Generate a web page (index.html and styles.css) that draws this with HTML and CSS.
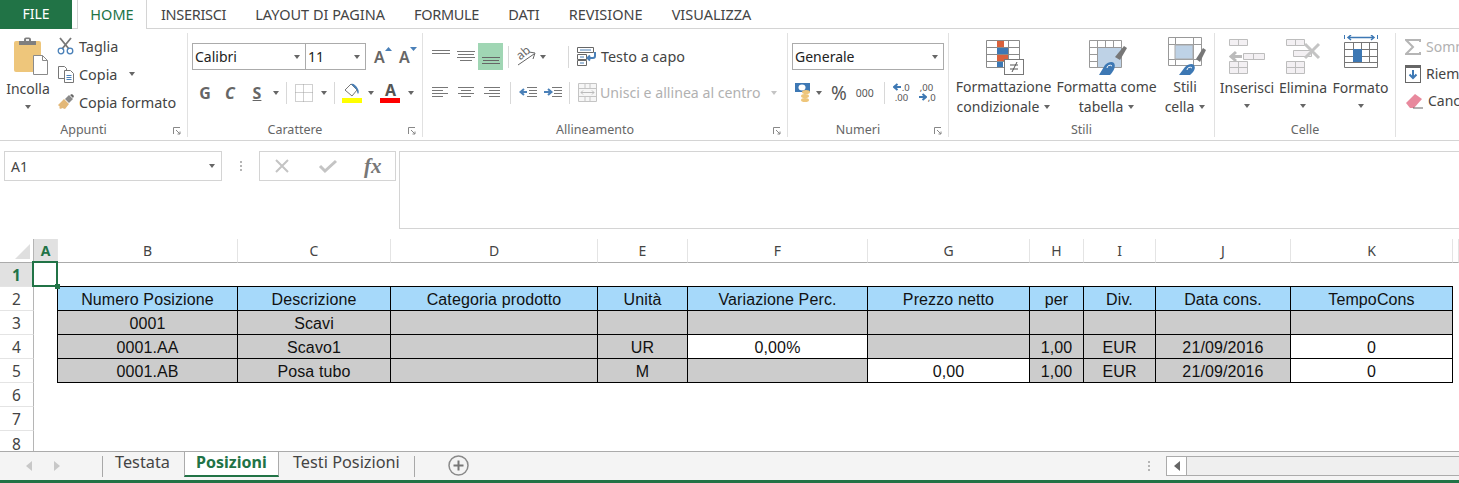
FILE: index.html
```html
<!DOCTYPE html>
<html lang="it">
<head>
  <meta charset="UTF-8">
  <title>Posizioni - Excel</title>
  <link rel="stylesheet" href="styles.css">
</head>
<body>
  <nav class="tabs">
    <div class="tab-file">FILE</div>
    <div class="tab tab-home">HOME</div>
    <div class="tab tab-tight">INSERISCI</div>
    <div class="tab">LAYOUT DI PAGINA</div>
    <div class="tab tab-tight">FORMULE</div>
    <div class="tab">DATI</div>
    <div class="tab">REVISIONE</div>
    <div class="tab">VISUALIZZA</div>
  </nav>

  <section class="ribbon">
    <!-- Appunti -->
    <div class="group g-appunti">
      <div class="group-body">
        <div class="big big-paste">
          <svg class="big-icon" width="34" height="38" viewBox="0 0 34 38"><rect x="0" y="4" width="27" height="31" rx="2" fill="#eec67b"/><path d="M5 4h5V2.500a2 2 0 0 1 2-2h3a2 2 0 0 1 2 2V4h5v4H5z" fill="#7f7f7f"/><rect x="12" y="2" width="3" height="2" fill="#eee"/><path d="M19.500 18.500h9l5 5v14h-14z" fill="#fff" stroke="#8a8a8a"/><path d="M28.500 18.500v5h5" fill="none" stroke="#8a8a8a"/></svg>
          <span class="big-label">Incolla</span>
          <i class="caret"></i>
        </div>
        <div class="small-list">
          <div class="small"><svg width="18" height="18" viewBox="0 0 18 18"><path d="M3 1l9 11M14 1L5 12" stroke="#777" stroke-width="1.800" fill="none"/><circle cx="4" cy="14" r="2.800" fill="none" stroke="#4a80b8" stroke-width="1.300"/><circle cx="13" cy="14" r="2.800" fill="none" stroke="#4a80b8" stroke-width="1.300"/></svg><span>Taglia</span></div>
          <div class="small"><svg width="18" height="18" viewBox="0 0 18 18"><path d="M1.500 1.500h6l2 2v10h-8z" fill="#fff" stroke="#777"/><path d="M7.500 5.500h6l3 3v9h-9z" fill="#fff" stroke="#777"/><path d="M9.500 10.500h5M9.500 12.500h5M9.500 14.500h5" stroke="#4a80b8"/></svg><span>Copia</span><i class="caret caret-copy"></i></div>
          <div class="small"><svg width="18" height="18" viewBox="0 0 18 18"><path d="M1 12l6-6 5 5-4 5-3-1-1 1-2-1 1-1z" fill="#e3b878"/><path d="M8 6l4-4 4 4-4 4z" fill="#8a8a8a"/><path d="M13 2l2-1 2 2-1 2z" fill="#666"/></svg><span>Copia formato</span></div>
        </div>
      </div>
      <div class="group-label pad-launcher">Appunti<svg class="launcher" width="8" height="8" viewBox="0 0 8 8"><path d="M.500 7V.500H7M3 3l4 4M7 4.500V7H4.500" fill="none" stroke="#888"/></svg></div>
    </div>

    <!-- Carattere -->
    <div class="group g-carattere">
      <div class="group-body column">
        <div class="tool-row">
          <div class="select sel-font"><span>Calibri</span><i class="caret"></i></div>
          <div class="select sel-size"><span>11</span><i class="caret"></i></div>
          <div class="font-size-btn grow-a">A<svg width="7" height="4" viewBox="0 0 7 4"><path d="M0 4l3.500-4L7 4z" fill="#4a80b8"/></svg></div>
          <div class="font-size-btn shrink-a">A<svg width="7" height="4" viewBox="0 0 7 4"><path d="M0 0l3.500 4L7 0z" fill="#4a80b8"/></svg></div>
        </div>
        <div class="tool-row row-low">
          <b class="style-btn">G</b>
          <b class="style-btn italic">C</b>
          <b class="style-btn under">S</b>
          <i class="caret caret-s"></i>
          <i class="sep sep-a"></i>
          <svg class="ic-border" width="18" height="18" viewBox="0 0 18 18"><path d="M.500.500h17v17H.500zM8.500 .500v17M.500 8.500h17" fill="none" stroke="#a0a0a0" stroke-dasharray="1 1"/></svg>
          <i class="caret caret-b"></i>
          <i class="sep sep-b"></i>
          <div class="color-btn fill-btn"><svg width="21" height="14" viewBox="0 0 21 14"><path d="M9 1l6 6-5 6-7-6z" fill="#fff" stroke="#777"/><path d="M9 1c2-1 5 1 7 5 1 2 1 4 0 5-1-1-1-3-1-4z" fill="#4a80b8"/></svg><i class="swatch yellow"></i></div>
          <i class="caret caret-f"></i>
          <div class="color-btn text-color"><b>A</b><i class="swatch red"></i></div>
          <i class="caret caret-t"></i>
        </div>
      </div>
      <div class="group-label pad-launcher">Carattere<svg class="launcher" width="8" height="8" viewBox="0 0 8 8"><path d="M.500 7V.500H7M3 3l4 4M7 4.500V7H4.500" fill="none" stroke="#888"/></svg></div>
    </div>

    <!-- Allineamento -->
    <div class="group g-allinea">
      <div class="group-body column">
        <div class="tool-row row-align">
          <div class="al-btn"><svg width="18" height="18" viewBox="0 0 18 18"><path d="M0 2.500h18M0 5.500h18" stroke="#777"/></svg></div>
          <div class="al-btn"><svg width="18" height="18" viewBox="0 0 18 18"><path d="M0 3.500h18M1 6.500h16M0 9.500h18M3 12.500h12" stroke="#777"/></svg></div>
          <div class="al-btn al-on"><svg width="18" height="18" viewBox="0 0 18 18"><path d="M0 9.500h18M1 12.500h16M0 15.500h18" stroke="#666"/></svg></div>
          <i class="sep sep-c"></i>
          <div class="orient"><span>ab</span><svg width="20" height="18" viewBox="0 0 20 18"><path d="M2 17L18 6" stroke="#666"/><path d="M13 4l6 1-2 6" fill="none" stroke="#666"/></svg></div>
          <i class="caret caret-o"></i>
          <i class="sep sep-d"></i>
          <div class="wide wrap-btn"><svg width="21" height="19" viewBox="0 0 21 19"><path d="M.500.500h16v5H.500zM.500 7.500h9v5h-9zM.500 13.500h9v5h-9z" fill="#fff" stroke="#666"/><path d="M3 3h11M3 10h4M3 16h4" stroke="#4a80b8"/><path d="M18 5v4a2 2 0 0 1-2 2h-5M13 8.500L10.500 11l2.500 2.500" fill="none" stroke="#4a80b8" stroke-width="2"/></svg><span>Testo a capo</span></div>
        </div>
        <div class="tool-row row-low row-align-low">
          <svg class="lines" width="16" height="12" viewBox="0 0 16 12"><path d="M0 .500h16M0 3.500h11M0 6.500h16M0 9.500h11" stroke="#777"/></svg>
          <svg class="lines" width="16" height="12" viewBox="0 0 16 12"><path d="M0 .500h16M3 3.500h10M0 6.500h16M3 9.500h10" stroke="#777"/></svg>
          <svg class="lines" width="16" height="12" viewBox="0 0 16 12"><path d="M0 .500h16M5 3.500h11M0 6.500h16M5 9.500h11" stroke="#777"/></svg>
          <i class="sep sep-e"></i>
          <svg class="ind" width="18" height="12" viewBox="0 0 18 12"><path d="M8 .500h10M10 3.500h8M10 6.500h8M8 9.500h10" stroke="#777"/><path d="M8 5H2M5 2L1.500 5 5 8" fill="none" stroke="#4a80b8" stroke-width="2"/></svg>
          <svg class="ind" width="18" height="12" viewBox="0 0 18 12"><path d="M8 .500h10M10 3.500h8M10 6.500h8M8 9.500h10" stroke="#777"/><path d="M0 5h7M4 2l3.500 3L4 8" fill="none" stroke="#4a80b8" stroke-width="2"/></svg>
          <i class="sep sep-f"></i>
          <div class="wide merge-btn"><svg width="19" height="19" viewBox="0 0 19 19"><path d="M.500.500h18v18H.500zM.500 5.500h18M.500 13.500h18M7 .500v5M12 .500v5M7 13.500v5M12 13.500v5" fill="#f6f6f6" stroke="#c4c4c4"/><path d="M3 9.500h13M5 7.500l-2 2 2 2M14 7.500l2 2-2 2" fill="none" stroke="#bbb"/></svg><span>Unisci e allinea al centro</span><i class="caret caret-m"></i></div>
        </div>
      </div>
      <div class="group-label pad-launcher">Allineamento<svg class="launcher" width="8" height="8" viewBox="0 0 8 8"><path d="M.500 7V.500H7M3 3l4 4M7 4.500V7H4.500" fill="none" stroke="#888"/></svg></div>
    </div>

    <!-- Numeri -->
    <div class="group g-numeri">
      <div class="group-body column">
        <div class="tool-row">
          <div class="select sel-num"><span>Generale</span><i class="caret"></i></div>
        </div>
        <div class="tool-row row-low row-num">
          <svg class="ic-money" width="16" height="19" viewBox="0 0 16 19"><rect x="0" y="0" width="15" height="9" fill="#3d78b4"/><ellipse cx="7" cy="4.500" rx="3.500" ry="3" fill="#fff"/><ellipse cx="11" cy="9" rx="4" ry="2" fill="#eec67b"/><ellipse cx="10" cy="13" rx="4" ry="2" fill="#eec67b"/><ellipse cx="10" cy="17" rx="4" ry="2" fill="#eec67b"/></svg>
          <i class="caret caret-n"></i>
          <span class="percent">%</span>
          <span class="thousands">000</span>
          <i class="sep sep-g"></i>
          <div class="dec"><svg width="8" height="8" viewBox="0 0 8 8"><path d="M8 4H2M4.500 1L1 4l3.500 3" fill="none" stroke="#3d78b4" stroke-width="2"/></svg><span class="dec-a">.0</span><span class="dec-b">.00</span></div>
          <div class="dec dec-right"><span class="dec-c">,00</span><svg width="8" height="8" viewBox="0 0 8 8"><path d="M0 4h6M3.500 1L7 4 3.500 7" fill="none" stroke="#3d78b4" stroke-width="2"/></svg><span class="dec-d">,0</span></div>
        </div>
      </div>
      <div class="group-label pad-launcher">Numeri<svg class="launcher" width="8" height="8" viewBox="0 0 8 8"><path d="M.500 7V.500H7M3 3l4 4M7 4.500V7H4.500" fill="none" stroke="#888"/></svg></div>
    </div>

    <!-- Stili -->
    <div class="group g-stili">
      <div class="group-body">
        <div class="big big-cond">
          <svg class="big-icon" width="38" height="36" viewBox="0 0 38 36"><path d="M.500.500h33v27H.500zM11.500.500v27M22.500.500v27M.500 7.500h33M.500 14.500h33M.500 21.500h33" fill="#fff" stroke="#8a8a8a"/><path d="M11 1h7v6h-7zM11 15h11v6H11z" fill="#d9613c"/><path d="M11 8h11v6H11zM11 22h6v5h-6z" fill="#3d78b4"/><rect x="18.500" y="19.500" width="19" height="15" fill="#fff" stroke="#777"/><path d="M24 25h8M24 29h8M31 22l-5 10" stroke="#555"/></svg>
          <span class="big-label two">Formattazione<br>condizionale<i class="caret inline"></i></span>
        </div>
        <div class="big big-table">
          <svg class="big-icon" width="38" height="38" viewBox="0 0 38 38"><path d="M.500 3.500h32v27H.500zM8.500 3.500v27M16.500 3.500v27M24.500 3.500v27M.500 10.500h32M.500 17.500h32M.500 24.500h32" fill="#fff" stroke="#999"/><rect x="9" y="11" width="23" height="19" fill="#bed2e6"/><path d="M26 20l9-11 3 2-7 12z" fill="#777"/><path d="M10 38l6-10c3-3 7-4 9-2 2 3 0 8-4 12z" fill="#3d78b4"/><path d="M18 31a3 3 0 0 1 5-2" stroke="#fff" fill="none"/></svg>
          <span class="big-label two">Formatta come<br>tabella<i class="caret inline"></i></span>
        </div>
        <div class="big big-style">
          <svg class="big-icon" width="38" height="38" viewBox="0 0 38 38"><path d="M.500.500h33v28H.500zM7.500.500v28M25.500.500v28M.500 7.500h33M.500 22.500h33" fill="#fff" stroke="#999"/><rect x="7" y="8" width="18" height="14" fill="#bed2e6" stroke="#aaa"/><path d="M28 22l7-11 3 2-6 12z" fill="#777"/><path d="M11 38l6-8c3-3 7-4 9-2 2 3 0 7-4 10z" fill="#3d78b4"/><path d="M19 33a3 3 0 0 1 5-2" stroke="#fff" fill="none"/></svg>
          <span class="big-label two">Stili<br>cella<i class="caret inline"></i></span>
        </div>
      </div>
      <div class="group-label">Stili</div>
    </div>

    <!-- Celle -->
    <div class="group g-celle">
      <div class="group-body">
        <div class="big big-ins">
          <svg class="big-icon" width="36" height="35" viewBox="0 0 36 35"><path d="M.500.500h18v6H.500zM9.500.500v6M14.500 14.500h21v6h-21zM24.500 14.500v6M.500 22.500h18v12H.500zM.500 28.500h18M9.500 22.500v12" fill="#f3f0f3" stroke="#bdbdbd"/><path d="M13 17.500H2M7 13l-5 4.500L7 22" fill="none" stroke="#bbb" stroke-width="3"/></svg>
          <span class="big-label">Inserisci</span>
          <i class="caret"></i>
        </div>
        <div class="big big-del">
          <svg class="big-icon" width="35" height="35" viewBox="0 0 35 35"><path d="M.500.500h18v6H.500zM9.500.500v6M7.500 11.500h18v6h-18zM.500 22.500h18v12H.500zM.500 28.500h18M9.500 22.500v12" fill="#f3f0f3" stroke="#bdbdbd"/><path d="M19 5l14 14M33 5L19 19" stroke="#c4c4c4" stroke-width="3"/></svg>
          <span class="big-label">Elimina</span>
          <i class="caret"></i>
        </div>
        <div class="big big-fmt">
          <svg class="big-icon" width="34" height="37" viewBox="0 0 34 37"><path d="M.500 0v4M33.500 0v4" fill="none" stroke="#3d78b4"/><path d="M4 2.500h26M7 0L4 2.500 7 5M27 0l3 2.500L27 5" fill="none" stroke="#3d78b4" stroke-width="1.500"/><path d="M.500 7.500h33v25H.500zM.500 14.500h33M.500 21.500h33M.500 27.500h33M9.500 7.500v20M17.500 7.500v20M25.500 7.500v20" fill="#fff" stroke="#777"/><rect x="9" y="14" width="9" height="13" fill="#3d78b4"/></svg>
          <span class="big-label">Formato</span>
          <i class="caret"></i>
        </div>
      </div>
      <div class="group-label">Celle</div>
    </div>

    <!-- Modifica, tagliato dal bordo della finestra -->
    <div class="group g-modifica">
      <div class="edit-list">
        <div class="small edit-off"><svg width="16" height="16" viewBox="0 0 16 16"><path d="M15 3V1H1l7 7-7 7h14v-2" fill="none" stroke="#b5b5b5" stroke-width="2"/></svg><span>Somma automatica</span></div>
        <div class="small"><svg width="16" height="18" viewBox="0 0 16 18"><rect x=".5" y="2.500" width="15" height="15" fill="#fff" stroke="#666"/><rect x="0" y="0" width="16" height="3" fill="#666"/><path d="M8 5v8M4.500 9.500L8 13l3.500-3.500" fill="none" stroke="#3d78b4" stroke-width="2"/></svg><span>Riempimento</span></div>
        <div class="small"><svg width="18" height="16" viewBox="0 0 18 16"><path d="M1 10l9-9 7 5-8 9H5z" fill="#e8899d"/><path d="M8 15h10" stroke="#666"/></svg><span>Cancella</span></div>
      </div>
    </div>
  </section>

  <section class="formula-bar">
    <div class="name-box"><span>A1</span><i class="caret"></i></div>
    <div class="grip"><i></i><i></i><i></i></div>
    <div class="fx-box">
      <svg width="16" height="16" viewBox="0 0 16 16"><path d="M2 2l12 12M14 2L2 14" stroke="#c4c4c4" stroke-width="2"/></svg>
      <svg width="20" height="16" viewBox="0 0 20 16"><path d="M2 8l5 5L18 3" fill="none" stroke="#c4c4c4" stroke-width="3"/></svg>
      <span class="fx">fx</span>
    </div>
    <div class="formula-input"></div>
  </section>

  <section class="sheet">
    <div class="cell head corner"><i></i></div>
    <div class="cell head head-on">A</div>
    <div class="cell head">B</div>
    <div class="cell head">C</div>
    <div class="cell head">D</div>
    <div class="cell head">E</div>
    <div class="cell head">F</div>
    <div class="cell head">G</div>
    <div class="cell head">H</div>
    <div class="cell head">I</div>
    <div class="cell head">J</div>
    <div class="cell head">K</div>
    <div class="cell head"></div>

    <div class="cell row-head row-on">1</div>
    <div class="cell a1"><div class="selection"><i></i></div></div>
    <div class="cell roof"></div><div class="cell roof"></div><div class="cell roof"></div><div class="cell roof"></div><div class="cell roof"></div><div class="cell roof"></div><div class="cell roof"></div><div class="cell roof"></div><div class="cell roof"></div><div class="cell roof"></div>
    <div class="cell"></div>

    <div class="cell row-head">2</div>
    <div class="cell before"></div>
    <div class="cell data blue">Numero Posizione</div>
    <div class="cell data blue">Descrizione</div>
    <div class="cell data blue">Categoria prodotto</div>
    <div class="cell data blue">Unità</div>
    <div class="cell data blue">Variazione Perc.</div>
    <div class="cell data blue">Prezzo netto</div>
    <div class="cell data blue">per</div>
    <div class="cell data blue">Div.</div>
    <div class="cell data blue">Data cons.</div>
    <div class="cell data blue">TempoCons</div>
    <div class="cell"></div>

    <div class="cell row-head">3</div>
    <div class="cell before"></div>
    <div class="cell data grey">0001</div>
    <div class="cell data grey">Scavi</div>
    <div class="cell data grey"></div>
    <div class="cell data grey"></div>
    <div class="cell data grey"></div>
    <div class="cell data grey"></div>
    <div class="cell data grey"></div>
    <div class="cell data grey"></div>
    <div class="cell data grey"></div>
    <div class="cell data grey"></div>
    <div class="cell"></div>

    <div class="cell row-head">4</div>
    <div class="cell before"></div>
    <div class="cell data grey">0001.AA</div>
    <div class="cell data grey">Scavo1</div>
    <div class="cell data grey"></div>
    <div class="cell data grey">UR</div>
    <div class="cell data">0,00%</div>
    <div class="cell data grey"></div>
    <div class="cell data grey">1,00</div>
    <div class="cell data grey">EUR</div>
    <div class="cell data grey">21/09/2016</div>
    <div class="cell data">0</div>
    <div class="cell"></div>

    <div class="cell row-head">5</div>
    <div class="cell before"></div>
    <div class="cell data grey">0001.AB</div>
    <div class="cell data grey">Posa tubo</div>
    <div class="cell data grey"></div>
    <div class="cell data grey">M</div>
    <div class="cell data grey"></div>
    <div class="cell data">0,00</div>
    <div class="cell data grey">1,00</div>
    <div class="cell data grey">EUR</div>
    <div class="cell data grey">21/09/2016</div>
    <div class="cell data">0</div>
    <div class="cell"></div>

    <div class="cell row-head">6</div>
    <div class="cell blank-row"></div>
    <div class="cell row-head">7</div>
    <div class="cell blank-row"></div>
    <div class="cell row-head row-cut">8</div>
    <div class="cell blank-row"></div>
  </section>

  <footer class="sheet-tabs">
    <svg class="nav-arrow" width="7" height="10" viewBox="0 0 7 10"><path d="M6 0v10L0 5z" fill="#c8c8c8"/></svg>
    <svg class="nav-arrow next" width="7" height="10" viewBox="0 0 7 10"><path d="M0 0v10l6-5z" fill="#c8c8c8"/></svg>
    <i class="tab-sep"></i>
    <div class="sheet-tab first">Testata</div>
    <div class="sheet-tab active">Posizioni</div>
    <div class="sheet-tab">Testi Posizioni</div>
    <i class="tab-sep tab-sep-end"></i>
    <svg class="add-sheet" width="21" height="21" viewBox="0 0 21 21"><circle cx="10.500" cy="10.500" r="9.500" fill="none" stroke="#8a8a8a" stroke-width="1.500"/><path d="M5.500 10.500h10M10.500 5.500v10" stroke="#777" stroke-width="2"/></svg>
    <div class="grip tabs-grip"><i></i><i></i><i></i></div>
    <div class="hscroll"><div class="hscroll-btn"><svg width="6" height="10" viewBox="0 0 6 10"><path d="M6 0v10L0 5z" fill="#666"/></svg></div></div>
  </footer>
  <div class="status"></div>
</body>
</html>
```

FILE: styles.css
```css
html, body {
  margin: 0;
  padding: 0;
  height: 483px;
  overflow: hidden;
  background: #fff;
}
body {
  font-family: "Noto Sans", "Open Sans", sans-serif;
  font-size: 14px;
  color: #444;
}
i { font-style: normal; display: block; }
svg { display: block; flex: none; }

.caret {
  width: 0;
  height: 0;
  flex: none;
  border-left: 3.500px solid transparent;
  border-right: 3.500px solid transparent;
  border-top: 4px solid #666;
}
.caret.inline { display: inline-block; margin-left: 5px; vertical-align: 3px; }
.sep { width: 1px; height: 22px; background: #d8d8d8; flex: none; }

/* tabs */
.tabs {
  display: flex;
  height: 28px;
  border-bottom: 1px solid #d4d4d4;
}
.tab-file {
  width: 72px;
  height: 29px;
  background: #217346;
  color: #fff;
  text-align: center;
  line-height: 28px;
  font-size: 14px;
}
.tab {
  line-height: 28px;
  margin-left: 29px;
  font-size: 14.500px;
  white-space: nowrap;
}
.tab-tight { letter-spacing: -.3px; }
.tab-home {
  width: 68px;
  height: 29px;
  margin-left: 5px;
  margin-right: -15px;
  text-align: center;
  color: #217346;
  background: #fff;
  border: 1px solid #d4d4d4;
  border-top: 0;
  border-bottom: 0;
}

/* ribbon */
.ribbon {
  display: flex;
  height: 112px;
  padding-top: 4px;
  box-sizing: border-box;
  border-bottom: 1px solid #d4d4d4;
}
.group {
  flex: none;
  position: relative;
  height: 104px;
  border-right: 1px solid #e1e1e1;
  display: flex;
  flex-direction: column;
  box-sizing: border-box;
}
.g-appunti { width: 188px; }
.g-carattere { width: 235px; }
.g-allinea { width: 365px; }
.g-numeri { width: 161px; }
.g-stili { width: 266px; }
.g-celle { width: 181px; }
.g-modifica { flex: 1; min-width: 0; overflow: hidden; border: 0; }

.group-body { display: flex; flex: none; height: 88px; }
.group-body.column { flex-direction: column; padding-top: 10px; box-sizing: border-box; }
.group-label {
  position: relative;
  text-align: center;
  line-height: 16px;
  margin-top: 1px;
  font-size: 12.500px;
  color: #666;
}
.pad-launcher { padding-right: 20px; }
.launcher { position: absolute; right: 6px; top: 5px; }

.big {
  display: flex;
  flex-direction: column;
  align-items: center;
  flex: none;
  white-space: nowrap;
}
.big-label { line-height: 20px; margin-top: 4px; }
.big-label.two { text-align: center; }
.big > .caret { margin-top: 6px; }

.big-paste { width: 56px; padding-top: 4px; }
.big-paste .big-icon { margin-left: 6px; }
.big-paste .big-label { margin-top: 4px; }
.small-list { margin-left: 1px; margin-top: -1px; font-size: 14.400px; }
.small {
  display: flex;
  align-items: center;
  height: 28px;
  gap: 4px;
  white-space: nowrap;
}
.caret-copy { margin-left: 8px; }

.tool-row { display: flex; flex: none; align-items: center; height: 27px; }
.row-low { margin-top: 9px; }

.select {
  display: flex;
  align-items: center;
  justify-content: space-between;
  box-sizing: border-box;
  height: 27px;
  border: 1px solid #ababab;
  padding: 0 5px 0 2px;
  background: #fff;
  color: #222;
}
.sel-font { width: 114px; margin-left: 4px; }
.sel-size { width: 61px; margin-left: -1px; }
.sel-num { width: 152px; margin-left: 4px; }

.font-size-btn {
  position: relative;
  font-size: 16px;
  font-weight: 600;
  color: #666;
  width: 16px;
}
.grow-a { margin-left: 8px; }
.shrink-a { margin-left: 9px; }
.font-size-btn svg { position: absolute; right: -2px; top: 1px; }

.style-btn { width: 16px; font-size: 16px; text-align: center; color: #666; font-weight: 700; }
.style-btn:first-child { margin-left: 9px; }
.style-btn.italic { margin-left: 9px; font-style: italic; }
.style-btn.under { margin-left: 11px; text-decoration: underline; }
.caret-s { margin-left: 8px; }
.sep-a { margin-left: 7px; }
.ic-border { margin-left: 8px; }
.caret-b { margin-left: 8px; }
.sep-b { margin-left: 7px; }
.color-btn { width: 21px; margin-left: 7px; }
.swatch { height: 5px; width: 20px; margin-top: 1px; }
.yellow { background: #ffff00; }
.red { background: #ff0000; }
.caret-f { margin-left: 5px; }
.text-color { margin-left: 6px; text-align: center; }
.text-color b { display: block; font-size: 16px; line-height: 14px; color: #555; }
.caret-t { margin-left: 7px; }

.al-btn { width: 25px; height: 27px; display: flex; align-items: center; justify-content: center; }
.al-on { background: #a0d6b4; }
.row-align { padding-left: 5px; }
.sep-c { margin-left: 5px; }
.orient { position: relative; width: 20px; height: 18px; margin-left: 7px; }
.orient span {
  position: absolute;
  left: 0;
  top: -2px;
  font-size: 12px;
  line-height: 14px;
  color: #666;
  transform: rotate(-40deg);
}
.caret-o { margin-left: 4px; }
.sep-d { margin-left: 22px; }
.wide { display: flex; align-items: center; gap: 3px; white-space: nowrap; margin-left: 8px; font-size: 14.400px; }
.merge-btn { color: #b1b1b1; font-size: 14.150px; }
.caret-m { margin-left: 8px; border-top-color: #c4c4c4; }
.row-align-low { padding-left: 9px; }
.lines { margin-right: 10px; }
.sep-e { margin-left: 0; }
.ind { margin-left: 8px; }
.ind + .ind { margin-left: 7px; }
.sep-f { margin-left: 7px; }

.row-num { padding-left: 7px; }
.caret-n { margin-left: 5px; }
.percent { font-size: 19px; margin-left: 9px; color: #555; }
.thousands { font-size: 10.500px; margin-left: 9px; margin-right: 2px; color: #555; }
.sep-g { margin-left: 8px; }
.dec {
  position: relative;
  width: 17px;
  height: 19px;
  margin-left: 8px;
  font-size: 9.500px;
  line-height: 9px;
  color: #555;
}
.dec svg { position: absolute; left: 0; top: 0; }
.dec span { position: absolute; }
.dec .dec-a { left: 9px; top: 0; }
.dec .dec-b { left: 2px; top: 10px; }
.dec-right { margin-left: 9px; }
.dec .dec-c { left: 1px; top: 0; }
.dec-right svg { top: 10px; }
.dec .dec-d { left: 9px; top: 10px; }

.big-cond { width: 103px; margin-left: 3px; padding-top: 7px; }
.big-cond .big-icon { margin-left: 2px; }
.big-table { width: 103px; padding-top: 4px; }
.big-table .big-icon { margin-left: 3px; }
.big-style { width: 54px; padding-top: 4px; }
.big-style .big-icon { margin-left: 3px; }
.big-cond .big-label { margin-top: 1px; }
.big-table .big-label { margin-top: 2px; }
.big-style .big-label { margin-top: 2px; }
.big-ins { width: 58px; margin-left: 3px; padding-top: 6px; }
.big-del { width: 54px; padding-top: 6px; }
.big-fmt { width: 57px; padding-top: 2px; margin-left: 2px; }
.big-fmt .big-label { margin-top: 6px; }

.edit-list { padding-left: 9px; }
.edit-list .small { height: 27px; gap: 5px; }
.edit-off { color: #b1b1b1; }

/* formula bar */
.formula-bar {
  display: flex;
  height: 98px;
  padding: 10px 0 10px 4px;
  box-sizing: border-box;
  align-items: flex-start;
}
.name-box {
  width: 218px;
  height: 30px;
  box-sizing: border-box;
  border: 1px solid #d4d4d4;
  padding: 0 6px 0 6px;
  display: flex;
  align-items: center;
  justify-content: space-between;
}
.grip { display: flex; flex-direction: column; gap: 2px; width: 37px; align-items: center; padding-top: 10px; }
.grip i { width: 2px; height: 2px; background: #b5b5b5; }
.fx-box {
  width: 137px;
  height: 30px;
  box-sizing: border-box;
  border: 1px solid #d4d4d4;
  display: flex;
  align-items: center;
  padding-left: 14px;
  gap: 28px;
}
.fx { font-family: "Liberation Serif", serif; font-style: italic; font-weight: 700; font-size: 21px; color: #777; margin-left: -2px; }
.formula-input {
  flex: 1;
  height: 78px;
  margin-left: 3px;
  box-sizing: border-box;
  border: 1px solid #d4d4d4;
  border-right: 0;
}

/* sheet */
.sheet {
  display: grid;
  grid-template-columns: 34px 24px 180px 153px 207px 90px 180px 162px 54px 72px 135px 162px 1fr;
  grid-auto-rows: 24px;
  height: 212px;
  overflow: hidden;
}
.cell { box-sizing: border-box; line-height: 24px; text-align: center; }
.head {
  font-size: 14px;
  line-height: 23px;
  border-bottom: 1px solid #ababab;
  border-right: 1px solid #e4e4e4;
  color: #444;
}
.corner { position: relative; border-right: 1px solid #b5b5b5; }
.corner i {
  position: absolute;
  right: 3px;
  bottom: 3px;
  width: 0;
  height: 0;
  border-left: 15px solid transparent;
  border-bottom: 15px solid #dfdfdf;
}
.head-on, .row-on { background: #e1e1e1; color: #217346; font-weight: 700; }
.row-head {
  font-size: 15.500px;
  border-right: 1px solid #b5b5b5;
  border-bottom: 1px solid #e4e4e4;
}
.row-cut { line-height: 27px; border-bottom: 0; }
.blank-row { grid-column: 2 / -1; }
.a1 { position: relative; }
.selection {
  position: absolute;
  left: -2px;
  top: -2px;
  width: 26px;
  height: 26px;
  box-sizing: border-box;
  border: 2px solid #217346;
  z-index: 2;
}
.selection i {
  position: absolute;
  right: -4px;
  bottom: -4px;
  width: 5px;
  height: 5px;
  background: #217346;
}
.roof { border-bottom: 1px solid #000; }
.before { border-right: 1px solid #000; }
.data {
  font-family: "Liberation Sans", Arial, sans-serif;
  font-size: 16px;
  letter-spacing: .12px;
  line-height: 23px;
  padding-top: 1px;
  color: #111;
  white-space: nowrap;
  border-right: 1px solid #000;
  border-bottom: 1px solid #000;
}
.blue { background: #a6d9fa; }
.grey { background: #cccccc; }

/* sheet tabs */
.sheet-tabs {
  display: flex;
  align-items: center;
  height: 29px;
  box-sizing: border-box;
  background: #f4f4f4;
  border-top: 1px solid #ababab;
}
.nav-arrow { margin-left: 26px; }
.nav-arrow.next { margin-left: 21px; }
.tab-sep { width: 1px; height: 21px; background: #a8a8a8; margin-left: 41px; }
.tab-sep-end { margin-left: 0; }
.sheet-tab {
  height: 26px;
  line-height: 23px;
  font-size: 16.300px;
  align-self: flex-start;
  padding: 0 14px;
  box-sizing: border-box;
  white-space: nowrap;
  margin-top: -1px;
}
.sheet-tab.first { padding: 0 14px 0 12px; }
.sheet-tab.active {
  width: 95px;
  padding: 0;
  text-align: center;
  font-size: 16px;
  line-height: 21px;
  background: #fff;
  color: #217346;
  font-weight: 700;
  border: 1px solid #ababab;
  border-bottom: 2px solid #217346;
}
.add-sheet { margin-left: 33px; position: relative; top: -1px; }
.tabs-grip { padding-top: 0; margin-left: auto; width: 34px; }
.hscroll {
  flex: none;
  width: 293px;
  height: 20px;
  box-sizing: border-box;
  border: 1px solid #ababab;
  border-right: 0;
  background: #efefef;
}
.hscroll-btn {
  width: 19px;
  height: 18px;
  background: #fff;
  border-right: 1px solid #ababab;
  display: flex;
  align-items: center;
  justify-content: center;
}
.status { height: 3px; background: #217346; }
```
